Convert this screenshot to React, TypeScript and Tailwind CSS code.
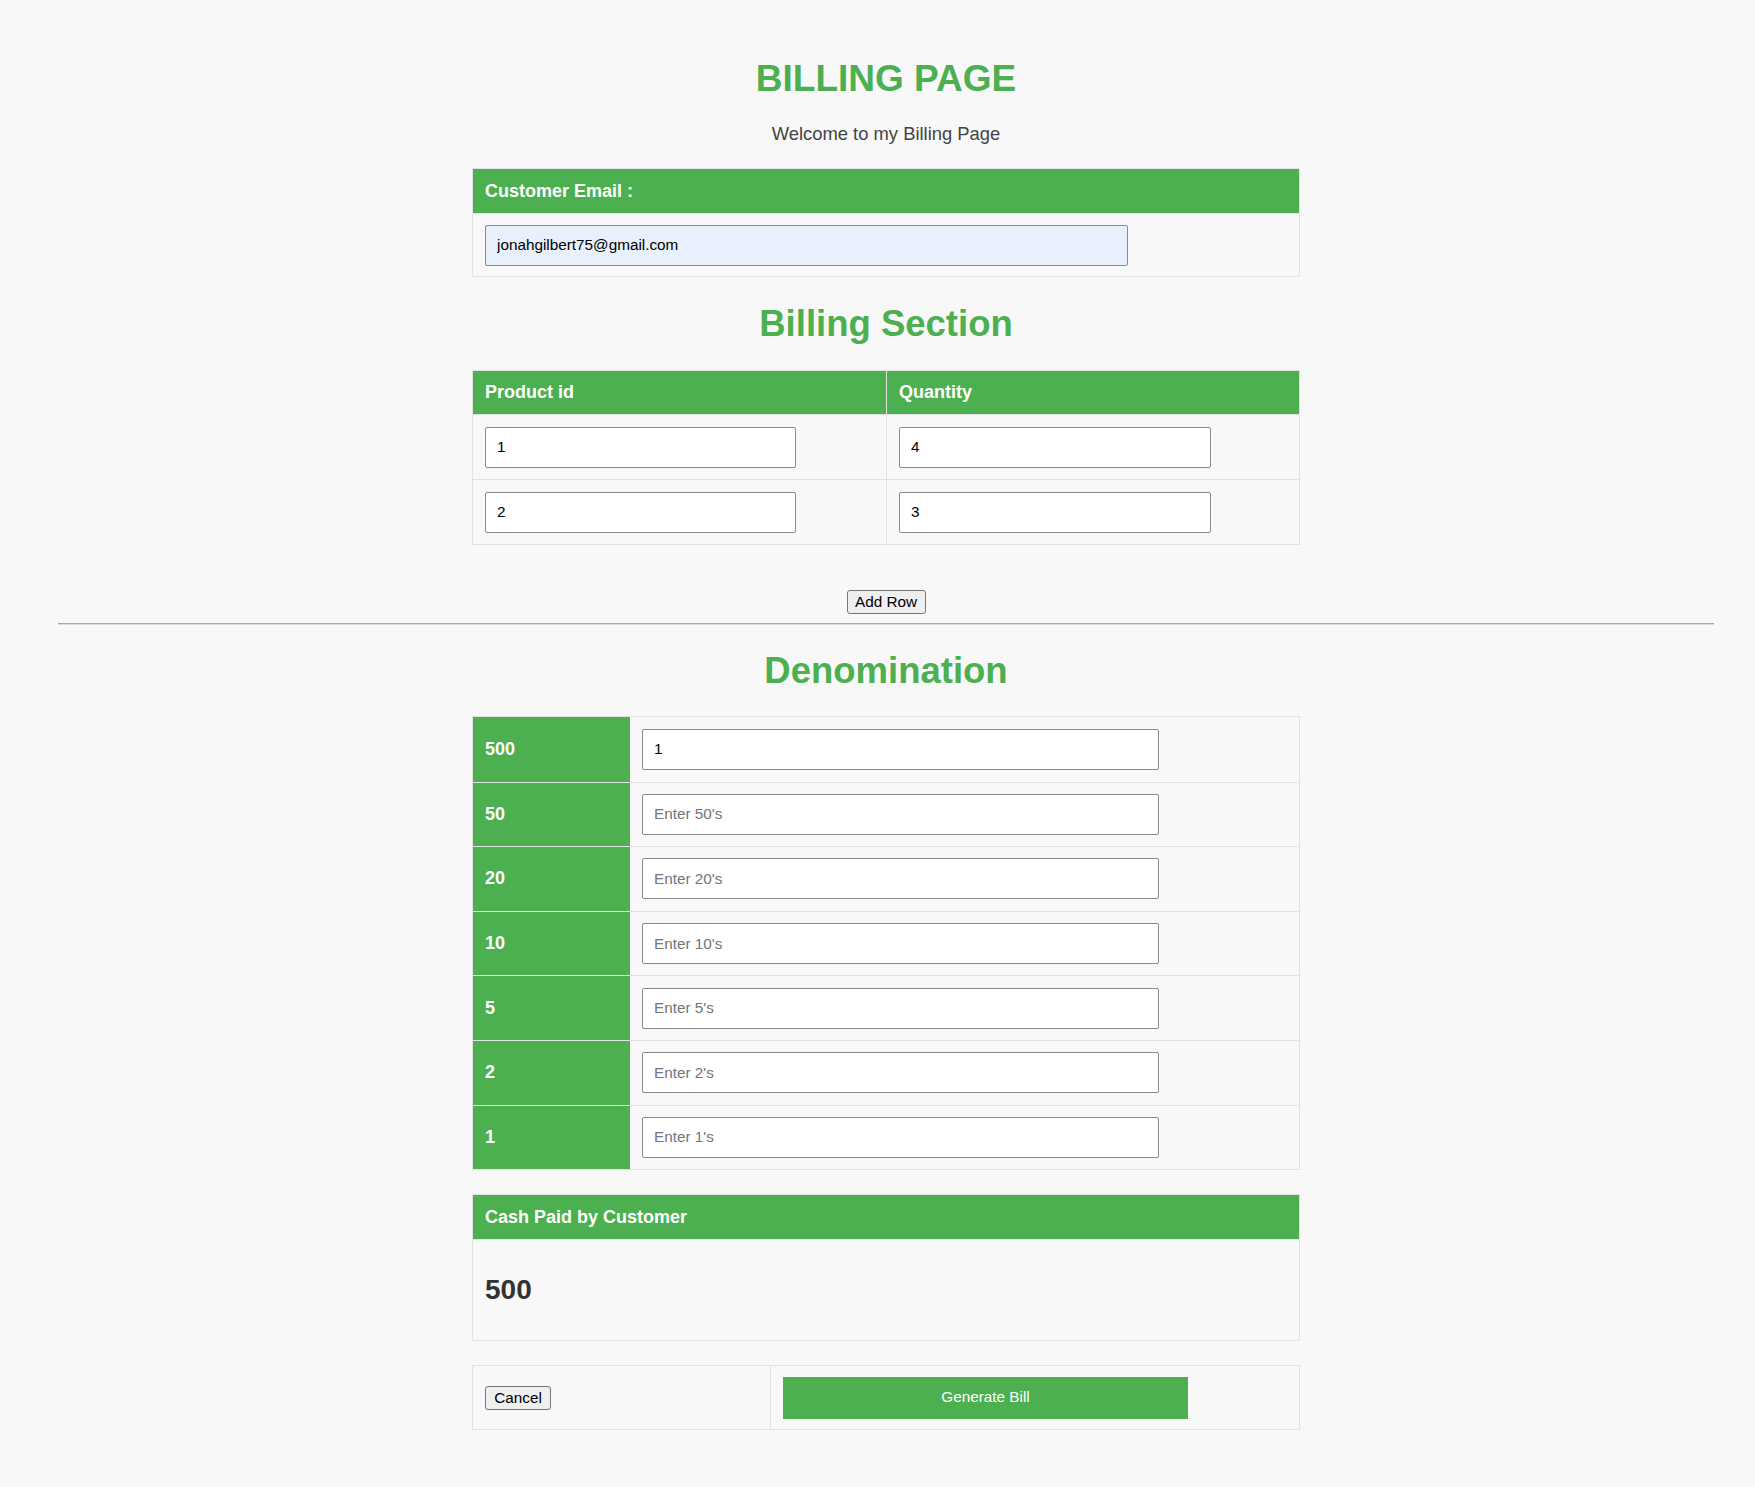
import React from "react";

const inputCls =
  "h-[41px] rounded-[2px] border border-[#8a8a8a] px-[11px] text-[15.3px] text-black outline-none placeholder:text-[#757575] font-['Liberation_Sans',Arial,sans-serif]";

const btnCls =
  "h-[24px] rounded-[3px] border border-[#767676] bg-[#efefef] text-[15.3px] text-black font-['Liberation_Sans',Arial,sans-serif] leading-none";

const denoms = [
  { v: "500", val: "1" },
  { v: "50" },
  { v: "20" },
  { v: "10" },
  { v: "5" },
  { v: "2" },
  { v: "1" },
];

export default function App() {
  return (
    <div className="min-h-[1487px] bg-[#f8f8f8] pl-[58px] pr-[41px] pt-[58px] pb-[58px] font-['Liberation_Sans',Arial,sans-serif]">
      <h1 className="text-center text-[37px] leading-[42px] font-bold text-[#4caf50]">BILLING PAGE</h1>
      <p className="mt-[23px] text-center text-[18.4px] leading-[21px] text-[#444]">Welcome to my Billing Page</p>

      {/* Customer email */}
      <div className="mx-auto mt-[24px] w-[828px] border border-[#e2e2e2]">
        <div className="flex h-[44px] items-center bg-[#4caf50] px-3 text-[18px] font-bold text-white">
          Customer Email :
        </div>
        <div className="flex h-[63px] items-center border-t border-[#e2e2e2] px-3">
          <input
            className={`${inputCls} w-[643px] bg-[#e8f0fe]`}
            defaultValue="jonahgilbert75@gmail.com"
          />
        </div>
      </div>

      <h2 className="mt-[26px] text-center text-[36.5px] leading-[42px] font-bold text-[#4caf50]">Billing Section</h2>

      {/* Billing table */}
      <div className="mx-auto mt-[25px] w-[828px] border border-[#e2e2e2]">
        <div className="grid h-[43px] grid-cols-2 bg-[#4caf50] text-[18px] font-bold text-white">
          <div className="flex items-center px-3">Product id</div>
          <div className="flex items-center border-l border-[#e2e2e2] px-3">Quantity</div>
        </div>
        {[
          ["1", "4"],
          ["2", "3"],
        ].map(([p, q], i) => (
          <div key={i} className="grid h-[65px] grid-cols-2 border-t border-[#e2e2e2]">
            <div className="flex items-center px-3">
              <input className={`${inputCls} w-[311px] bg-white`} defaultValue={p} />
            </div>
            <div className="flex items-center border-l border-[#e2e2e2] px-3">
              <input className={`${inputCls} w-[312px] bg-white`} defaultValue={q} />
            </div>
          </div>
        ))}
      </div>

      <button className={`${btnCls} mx-auto mt-[45px] block w-[79px]`}>Add Row</button>

      <hr className="mt-[9px] border-0 border-t border-b border-t-[#a8a8a8] border-b-[#dcdcdc]" />

      <h2 className="mt-[25px] text-center text-[36.5px] leading-[42px] font-bold text-[#4caf50]">Denomination</h2>

      {/* Denomination table */}
      <div className="mx-auto mt-[24px] w-[828px] border border-[#e2e2e2]">
        {denoms.map((d, i) => (
          <div
            key={d.v + i}
            className={`grid h-[64.6px] grid-cols-[157px_1fr] ${i > 0 ? "border-t border-[#e2e2e2]" : ""}`}
          >
            <div className="flex items-center bg-[#4caf50] px-3 text-[18px] font-bold text-white">{d.v}</div>
            <div className="flex items-center px-3">
              <input
                className={`${inputCls} w-[517px] bg-white`}
                defaultValue={d.val}
                placeholder={d.val ? undefined : `Enter ${d.v}'s`}
              />
            </div>
          </div>
        ))}
      </div>

      {/* Cash paid */}
      <div className="mx-auto mt-[24px] w-[828px] border border-[#e2e2e2]">
        <div className="flex h-[44px] items-center bg-[#4caf50] px-3 text-[18px] font-bold text-white">
          Cash Paid by Customer
        </div>
        <div className="flex h-[101px] items-center border-t border-[#e2e2e2] px-3">
          <span className="text-[28px] font-bold text-[#333]">500</span>
        </div>
      </div>

      {/* Actions */}
      <div className="mx-auto mt-[24px] grid h-[65px] w-[828px] grid-cols-[297px_1fr] border border-[#e2e2e2]">
        <div className="flex items-center px-3">
          <button className={`${btnCls} w-[66px]`}>Cancel</button>
        </div>
        <div className="flex items-center border-l border-[#e2e2e2] px-3">
          <button className="h-[42px] w-[405px] bg-[#4caf50] text-[15.3px] text-white">Generate Bill</button>
        </div>
      </div>
    </div>
  );
}
